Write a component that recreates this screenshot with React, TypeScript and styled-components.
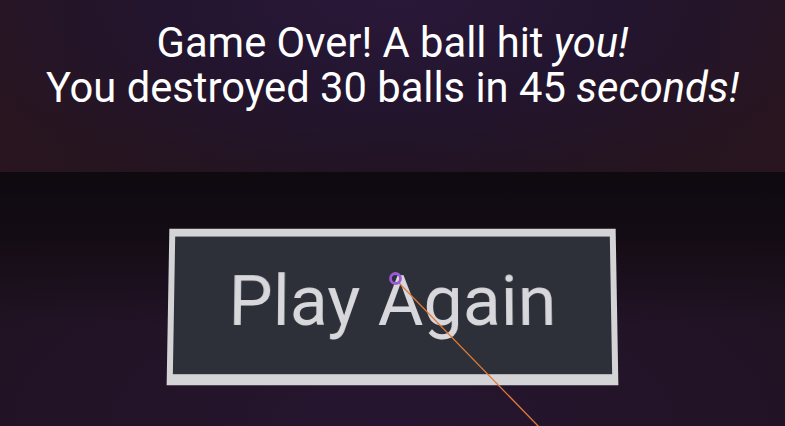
import React from "react";
import styled, { createGlobalStyle } from "styled-components";

const Global = createGlobalStyle`
  html, body { margin: 0; padding: 0; background: #120b12; }
  body { font-family: Roboto, "Noto Sans", sans-serif; }
  #root { width: 785px; height: 426px; overflow: hidden; }
`;

const Scene = styled.div`
  position: relative;
  width: 785px;
  height: 426px;
  display: flex;
  flex-direction: column;
  overflow: hidden;
`;

const Wall = styled.div`
  height: 172px;
  display: flex;
  justify-content: center;
  background:
    radial-gradient(ellipse 60% 120% at 50% 0%, #2a1838 0%, #231530 45%, rgba(35, 21, 48, 0) 100%),
    linear-gradient(90deg, #28151f 0%, #21131e 50%, #28151f 100%);
`;

const Message = styled.h1`
  margin: 0;
  padding-top: 20px;
  color: #ffffff;
  font-family: Roboto, sans-serif;
  font-weight: 400;
  font-size: 41.7px;
  line-height: 45px;
  text-align: center;
  white-space: nowrap;
`;

const Em = styled.em`
  font-style: italic;
`;

const Floor = styled.div`
  flex: 1;
  display: flex;
  justify-content: center;
  padding-top: 56px;
  background:
    linear-gradient(180deg, #0e0a10 0%, #140c15 25%, rgba(20, 12, 21, 0) 60%),
    radial-gradient(ellipse 70% 100% at 50% 100%, #261530 0%, #1f1220 100%);
`;

const Button = styled.button`
  box-sizing: border-box;
  width: 449px;
  height: 157px;
  background: #2d3038;
  border-style: solid;
  border-color: #d4d3d6;
  border-width: 8px 6px 11px 6px;
  color: #d8d8dc;
  font-family: Roboto, sans-serif;
  font-size: 70px;
  font-weight: 400;
  padding: 0 0 8px 0;
  cursor: pointer;
  transform: perspective(900px) rotateX(4deg);
  transform-origin: 50% 50%;
`;

const Pointer = styled.svg`
  position: absolute;
  left: 0;
  top: 0;
  pointer-events: none;
`;

export default function App() {
  return (
    <>
      <Global />
      <Scene>
        <Wall>
          <Message>
            Game Over! A ball hit <Em>you!</Em>
            <br />
            You destroyed 30 balls in 45 <Em>seconds!</Em>
          </Message>
        </Wall>
        <Floor>
          <Button>Play Again</Button>
        </Floor>
        <Pointer width="785" height="426" viewBox="0 0 785 426">
          <line x1="398" y1="282" x2="542" y2="430" stroke="#e07a3a" strokeWidth="1.3" />
          <circle cx="395.5" cy="278.5" r="5" fill="none" stroke="#9d5ad8" strokeWidth="2.8" />
        </Pointer>
      </Scene>
    </>
  );
}
